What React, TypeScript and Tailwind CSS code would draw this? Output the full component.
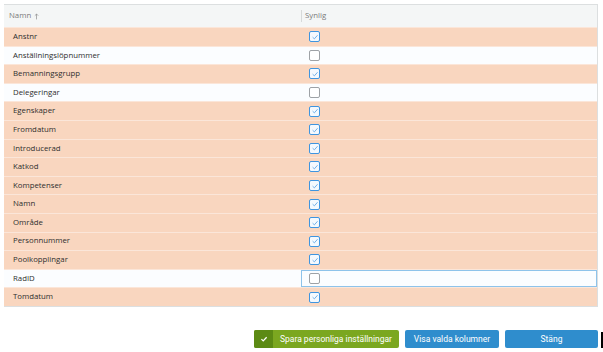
import {useState} from "react";

type Row = {
  name: string;
  visible: boolean;
};

const initialRows: Row[] = [
  {name: "Anstnr", visible: true},
  {name: "Anställningslöpnummer", visible: false},
  {name: "Bemanningsgrupp", visible: true},
  {name: "Delegeringar", visible: false},
  {name: "Egenskaper", visible: true},
  {name: "Fromdatum", visible: true},
  {name: "Introducerad", visible: true},
  {name: "Katkod", visible: true},
  {name: "Kompetenser", visible: true},
  {name: "Namn", visible: true},
  {name: "Område", visible: true},
  {name: "Personnummer", visible: true},
  {name: "Poolkopplingar", visible: true},
  {name: "RadID", visible: false},
  {name: "Tomdatum", visible: true},
];

function Checkbox({checked, onChange}: {checked: boolean; onChange: () => void}) {
  return (
    <button
      type="button"
      onClick={onChange}
      className={
        checked
          ? "flex h-[11px] w-[11px] items-center justify-center rounded-[2px] border border-[#3f95e0] bg-[#f4f9fe]"
          : "flex h-[11px] w-[11px] items-center justify-center rounded-[2px] border border-[#9ea2a6] bg-white"
      }
    >
      {checked && (
        <svg viewBox="0 0 10 10" className="h-[8px] w-[8px]">
          <path d="M2 5.2 L4.2 7.3 L8.2 2.8" fill="none" stroke="#5fa6e6" strokeWidth="1.1" />
        </svg>
      )}
    </button>
  );
}

export default function App() {
  const [rows, setRows] = useState(initialRows);
  const toggle = (i: number) =>
    setRows((prev) => prev.map((r, j) => (j === i ? {...r, visible: !r.visible} : r)));

  return (
    <div className="h-[352px] w-[603px] bg-white font-['Open_Sans',Arial,sans-serif] text-[7.8px] text-[#333]">
      <div className="pl-[4px] pr-[5px] pt-[4px]">
        <div className="border-r border-b border-t border-[#dcdfe0]">
          <div className="flex h-[22px] items-center bg-[#f4f6f6] text-[#7a7a7a]">
            <div className="flex w-[297px] items-center gap-[3px] pl-[5px]">
              <span>Namn</span>
              <svg viewBox="0 0 6 8" className="h-[7px] w-[5px]">
                <path d="M3 7.5 V1 M1 3 L3 1 L5 3" fill="none" stroke="#888" strokeWidth="0.8" />
              </svg>
            </div>
            <div className="h-[12px] border-l border-[#d7dada]"></div>
            <div className="pl-[3px]">Synlig</div>
          </div>
          {rows.map((row, i) => (
            <div
              key={row.name}
              className={
                (row.visible ? "bg-[#f9d6bf] " : "bg-[#fbfdff] ") +
                "flex h-[18.6px] items-center border-t border-[#fbe6d9]"
              }
            >
              <div className="w-[297px] pl-[9px] text-[#2e2e2e]">{row.name}</div>
              <div
                className={
                  row.name === "RadID"
                    ? "flex h-full flex-1 items-center border border-[#8ec3ea] pl-[7px]"
                    : "flex h-full flex-1 items-center pl-[8px]"
                }
              >
                <Checkbox checked={row.visible} onChange={() => toggle(i)} />
              </div>
            </div>
          ))}
        </div>
      </div>
      <div className="mt-[23px] flex items-center justify-end gap-[6px] pr-[5px]">
        <button className="flex h-[18px] w-[145px] items-stretch rounded-[2px] bg-[#7ba720] text-white">
          <span className="flex w-[19px] items-center justify-center rounded-l-[2px] bg-[#5c8a14]">
            <svg viewBox="0 0 10 10" className="h-[8px] w-[8px]">
              <path d="M1.8 5.2 L4 7.3 L8.3 2.8" fill="none" stroke="white" strokeWidth="1.6" />
            </svg>
          </span>
          <span className="flex flex-1 items-center justify-center font-['Roboto',sans-serif] text-[8.5px]">
            Spara personliga inställningar
          </span>
        </button>
        <button className="h-[18px] w-[94px] rounded-[2px] bg-[#2f8dcd] font-['Roboto',sans-serif] text-[8.5px] text-white">
          Visa valda kolumner
        </button>
        <button className="h-[18px] w-[93px] rounded-[2px] bg-[#2f8dcd] font-['Roboto',sans-serif] text-[8.5px] text-white">
          Stäng
        </button>
      </div>
      <div className="ml-[601px] -mt-[16px] h-[16px] w-[2px] bg-black"></div>
    </div>
  );
}
